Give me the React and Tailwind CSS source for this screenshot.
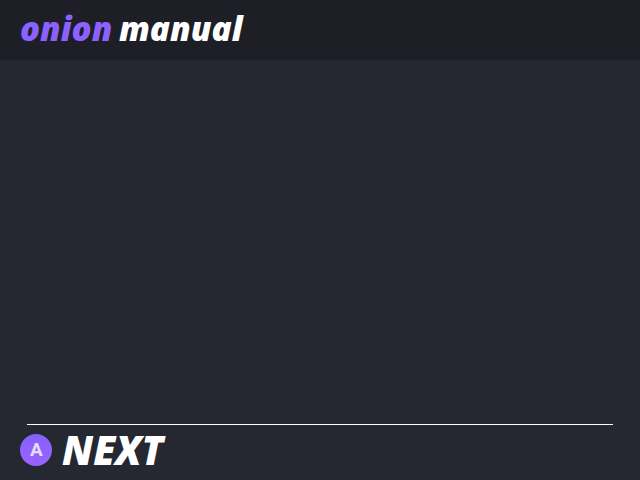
export default function App() {
  return (
    <main className="flex h-[480px] w-[640px] flex-col overflow-hidden bg-[#252830] font-['Open_Sans','Noto_Sans',sans-serif] text-white">
      <header className="flex h-[60px] shrink-0 items-center bg-[#1e1e26] pb-1 pl-5">
        <h1 className="flex text-[34px] leading-none font-extrabold italic whitespace-nowrap">
          <span className="w-[99px] text-[#8b62ff]"><span className="inline-block origin-left scale-x-[0.975]">onion</span></span>
          <span className="origin-left scale-x-[0.98]">manual</span>
        </h1>
      </header>
      <section className="flex-1" />
      <footer className="flex h-14 shrink-0 flex-col">
        <div className="mx-[27px] h-px shrink-0 bg-white" />
        <div className="flex h-[50px] items-center pl-5">
          <span className="flex size-8 items-center justify-center rounded-full bg-linear-to-b from-[#8261ff] to-[#9b62ff] pl-px font-['Roboto',sans-serif] text-[19px] font-bold text-[#e5dcf5]">A</span>
          <span className="ml-[10px] origin-left scale-x-[0.985] text-[40px] leading-none font-extrabold italic">NEXT</span>
        </div>
      </footer>
    </main>
  );
}
